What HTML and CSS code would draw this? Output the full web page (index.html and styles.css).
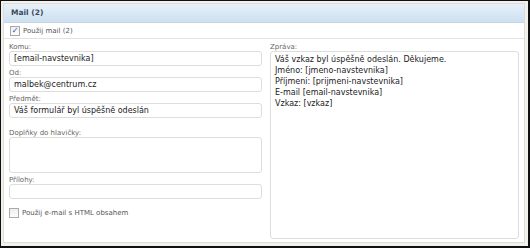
FILE: index.html
```html
<html>
<head>
  <title>Mail</title>
  <link rel="stylesheet" href="styles.css">
</head>
<body>
  <div class="frame">
    <div class="panel">
      <div class="panel-head">Mail (2)</div>
      <div class="use-row">
        <label class="check"><span class="box checked">&#10003;</span>Použij mail (2)</label>
      </div>
      <div class="cols">
        <div class="col-left">
          <label class="lbl">Komu:</label>
          <div class="field">[email-navstevnika]</div>
          <label class="lbl">Od:</label>
          <div class="field">malbek@centrum.cz</div>
          <label class="lbl">Předmět:</label>
          <div class="field">Váš formulář byl úspěšně odeslán</div>
          <label class="lbl spaced">Doplňky do hlavičky:</label>
          <div class="field area"></div>
          <label class="lbl">Přílohy:</label>
          <div class="field"></div>
          <label class="check html"><span class="box"></span>Použij e-mail s HTML obsahem</label>
        </div>
        <div class="col-right">
          <label class="lbl">Zpráva:</label>
          <div class="field message">Váš vzkaz byl úspěšně odeslán. Děkujeme.<br>Jméno: [jmeno-navstevnika]<br>Příjmeni: [prijmeni-navstevnika]<br>E-mail [email-navstevnika]<br>Vzkaz: [vzkaz]</div>
        </div>
      </div>
    </div>
  </div>
</body>
</html>
```

FILE: styles.css
```css
/* cadre sombre autour de la capture */
body {
  margin: 0;
  background: #111;
  font-family: "DejaVu Sans", Verdana, sans-serif;
  color: #333;
}
.frame {
  width: 527px;
  height: 245px;
  margin: 1px 0 0 1px;
  background: #f3f1ec;
  padding: 2px 3px 3px 2px;
  box-sizing: border-box;
}
.panel {
  height: 100%;
  box-sizing: border-box;
  border: 1px solid #dcdcdc;
  background: #fff;
  display: flex;
  flex-direction: column;
}
.panel-head {
  height: 18px;
  line-height: 18px;
  padding-left: 7px;
  font-size: 7.5px;
  font-weight: bold;
  color: #3b4a5c;
  background: linear-gradient(#e8f1f9, #cde0f1);
  border-bottom: 1px solid #c4d6e6;
}
.use-row {
  height: 15px;
  padding-left: 6px;
  border-bottom: 1px solid #e2e2e2;
  display: flex;
  align-items: center;
}
.check {
  display: flex;
  align-items: center;
  font-size: 7px;
  color: #555;
}
.box {
  width: 8px;
  height: 8px;
  border: 1px solid #a9a9a9;
  background: linear-gradient(#eee, #fdfdfd);
  margin-right: 3px;
  font-size: 8px;
  font-weight: bold;
  line-height: 8px;
  text-align: center;
  color: #2858b0;
}
.cols {
  flex: 1;
  display: flex;
  gap: 8px;
  padding: 1px 5px 3px 5px;
}
.col-left {
  width: 253px;
  display: flex;
  flex-direction: column;
}
.col-right {
  flex: 1;
  display: flex;
  flex-direction: column;
}
.lbl {
  font-size: 7px;
  color: #666;
  height: 10px;
  line-height: 14px;
  margin-bottom: 1px;
}
.lbl.spaced {
  margin-top: 8px;
}
.field {
  height: 15px;
  box-sizing: border-box;
  border: 1px solid #ddd;
  border-radius: 3px;
  padding: 0 4px;
  font-size: 8px;
  line-height: 13px;
  color: #222;
}
.field.area {
  height: 36px;
}
.field.message {
  flex: 1;
  padding: 2px 4px;
  line-height: 11px;
}
.check.html {
  margin-top: 9px;
}
```
